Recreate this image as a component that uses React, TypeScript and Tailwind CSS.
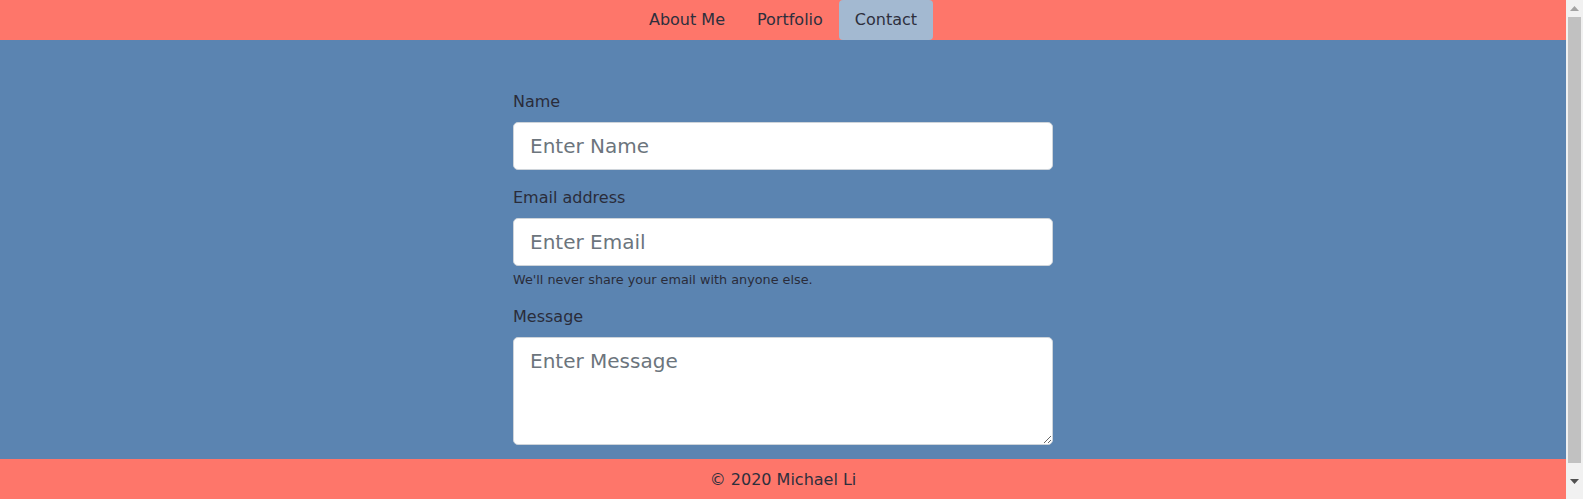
import React from "react";

function FakeScrollbar() {
  return (
    <div className="w-[17px] h-[499px] bg-[#f1f1f1] flex flex-col items-center shrink-0">
      <div className="h-[17px] w-full flex items-center justify-center">
        <svg width="9" height="5" viewBox="0 0 9 5">
          <polygon points="4.5,0 9,5 0,5" fill="#a3a3a3" />
        </svg>
      </div>
      <div className="w-[13px] h-[446px] bg-[#c1c1c1]" />
      <div className="flex-1 w-full flex items-center justify-center">
        <svg width="9" height="5" viewBox="0 0 9 5">
          <polygon points="0,0 9,0 4.5,5" fill="#505050" />
        </svg>
      </div>
    </div>
  );
}

export default function App() {
  const font = { fontFamily: '"DejaVu Sans", "Liberation Sans", sans-serif' };
  const inputCls =
    "h-12 w-full bg-white border border-[#ced4da] rounded-[5px] px-4 text-[20px] text-[#495057] placeholder:text-[#6c757d] outline-none";
  return (
    <div className="h-[499px] w-full flex overflow-hidden" style={font}>
      <div className="w-[1566px] shrink-0 min-h-[521px] flex flex-col bg-[#5b84b1] text-[#2a2c3a]">
        <nav className="h-10 shrink-0 bg-[#fe766a] flex justify-center items-stretch text-[16px] leading-6">
          <a className="px-4 py-2 text-[#2d2f3d]">About Me</a>
          <a className="px-4 py-2 text-[#2d2f3d]">Portfolio</a>
          <a className="px-4 py-2 text-[#2d2f3d] bg-[#a3b9d1] rounded-[4px]">Contact</a>
        </nav>
        <main className="flex-1 flex justify-center pt-[50px] pb-[14px]">
          <form className="w-[540px] flex flex-col" onSubmit={(e) => e.preventDefault()}>
            <div className="flex flex-col mb-4">
              <label className="text-[16px] leading-6 mb-2">Name</label>
              <input type="text" placeholder="Enter Name" className={inputCls} />
            </div>
            <div className="flex flex-col mb-4">
              <label className="text-[16px] leading-6 mb-2">Email address</label>
              <input type="email" placeholder="Enter Email" className={inputCls} />
              <small className="mt-1 text-[12.8px] leading-[19.2px] text-[#2a2c3a]">
                We'll never share your email with anyone else.
              </small>
            </div>
            <div className="flex flex-col">
              <label className="text-[16px] leading-6 mb-2">Message</label>
              <textarea
                rows={3}
                placeholder="Enter Message"
                className="h-[108px] w-full bg-white border border-[#ced4da] rounded-[5px] px-4 py-2 text-[20px] leading-[30px] text-[#495057] placeholder:text-[#6c757d] outline-none resize-y"
              />
            </div>
          </form>
        </main>
        <footer className="shrink-0 bg-[#fe766a] pt-[9px] pb-[29px] text-center text-[16px] leading-6 text-[#2d2f3d]">
          © 2020 Michael Li
        </footer>
      </div>
      <FakeScrollbar />
    </div>
  );
}
